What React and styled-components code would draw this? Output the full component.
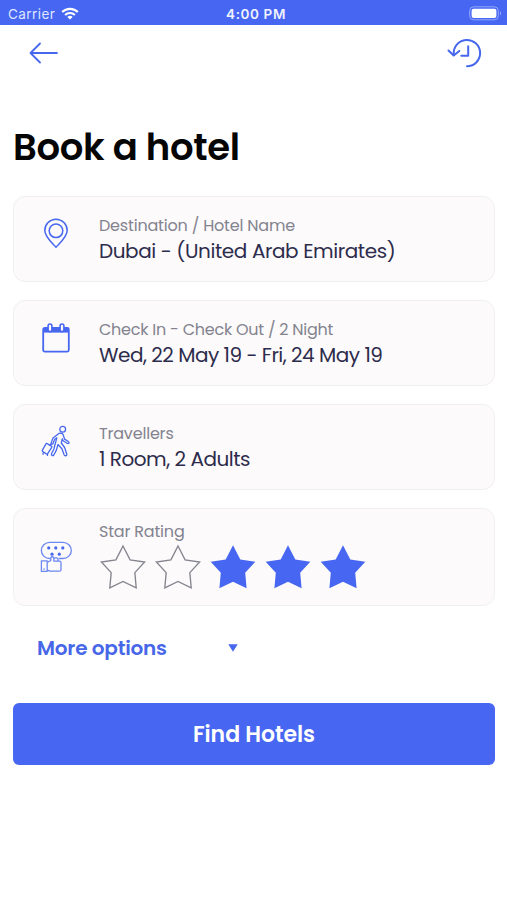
import React, { useState } from 'react'
import styled, { createGlobalStyle } from 'styled-components'

const GlobalStyle = createGlobalStyle`
  * {
    box-sizing: border-box;
  }
  body {
    margin: 0;
    background-color: #fff;
    font-family: 'Poppins', 'Inter', sans-serif;
  }
  button {
    font-family: inherit;
    border: none;
    background: none;
    padding: 0;
    cursor: pointer;
  }
  svg {
    display: block;
  }
`;

const Screen = styled.div`
  width: 100%;
  min-height: 900px;
  background-color: #fff;
`;

const StatusBar = styled.div`
  display: grid;
  grid-template-columns: 1fr auto 1fr;
  align-items: center;
  height: 25px;
  padding: 2px 5px 0 8px;
  background-color: #4767f2;
  color: #fff;
  font-family: 'Inter', sans-serif;
`;

const Carrier = styled.div`
  display: flex;
  align-items: center;
  gap: 6px;
  font-size: 13.5px;
  letter-spacing: 0.45px;
  color: #dfe5ff;
`;

const Time = styled.div`
  font-size: 13.5px;
  font-weight: 600;
  letter-spacing: 0.6px;
  padding-left: 2px;
  color: #f0f3ff;
`;

const Battery = styled.div`
  justify-self: end;
`;

const NavBar = styled.nav`
  display: flex;
  justify-content: space-between;
  align-items: center;
  height: 56px;
  padding: 0 25px 0 29px;
`;

const Content = styled.main`
  padding: 0 12px 0 13px;
`;

const Title = styled.h1`
  margin: 41px 0 24px;
  font-size: 37px;
  line-height: 50px;
  font-weight: 600;
  letter-spacing: -0.35px;
  color: #050505;
`;

const CardList = styled.div`
  display: flex;
  flex-direction: column;
  gap: 18px;
`;

const Card = styled.div`
  display: flex;
  height: ${({ $tall }) => ($tall ? '98px' : '86px')};
  padding-top: ${({ $tall }) => ($tall ? '11px' : '17px')};
  border: 1px solid #f1f0f2;
  border-radius: 12px;
  background-color: #fcfafb;
`;

const IconBox = styled.div`
  display: flex;
  justify-content: center;
  width: 85px;
  padding: ${({ $top }) => $top}px 2px 0 0;
`;

const Label = styled.div`
  height: 24px;
  font-size: 16px;
  line-height: 24px;
  letter-spacing: ${({ $spacing }) => $spacing || -0.19}px;
  white-space: nowrap;
  color: #83838f;
`;

const Value = styled.div`
  font-size: 20px;
  line-height: 26px;
  letter-spacing: ${({ $spacing }) => $spacing || 0}px;
  white-space: nowrap;
  color: #2d2c4c;
`;

const Stars = styled.div`
  display: flex;
  gap: 9px;
  padding-left: 1px;
`;

const MoreOptions = styled.button`
  display: flex;
  align-items: center;
  justify-content: space-between;
  width: 201px;
  height: 30px;
  margin: 27px 0 40px 24px;
  font-size: 20px;
  font-weight: 600;
  letter-spacing: -0.22px;
  color: #4767e8;
`;

const FindButton = styled.button`
  display: block;
  width: 100%;
  height: 62px;
  border-radius: 6px;
  background-color: #4767f2;
  color: #fff;
  font-size: 22px;
  font-weight: 600;
  letter-spacing: -0.03px;
`;

const BLUE = '#4767ee'

function WifiIcon() {
  return (
    <svg width="18" height="13" viewBox="0 0 18 13" fill="none" stroke="#fff" strokeWidth="2.1">
      <path d="M1.2 5.1a11 11 0 0 1 15.6 0" />
      <path d="M4.1 8a6.9 6.9 0 0 1 9.8 0" />
      <path d="M9 12.6 6.3 10a3.8 3.8 0 0 1 5.4 0z" fill="#fff" stroke="none" />
    </svg>
  )
}

function BatteryIcon() {
  return (
    <svg width="33" height="15" viewBox="0 0 33 15">
      <rect x="0.7" y="0.8" width="28.6" height="13" rx="4" fill="none" stroke="#95a8fa" />
      <rect x="2.6" y="2.7" width="24.8" height="9.2" rx="2" fill="#fff" />
      <path d="M31 5.2v4.2c1.4-.6 1.4-3.6 0-4.2z" fill="#95a8fa" />
    </svg>
  )
}

function BackIcon() {
  return (
    <svg width="30" height="22" viewBox="0 0 30 22" fill="none" stroke={BLUE} strokeWidth="1.8" strokeLinecap="round" strokeLinejoin="round">
      <path d="M11 1.5 1.5 11 11 20.5M1.5 11H28" />
    </svg>
  )
}

function HistoryIcon() {
  return (
    <svg width="36" height="30" viewBox="0 0 36 30" fill="none" stroke={BLUE} strokeWidth="2" strokeLinecap="round" strokeLinejoin="round">
      <path d="M7.8 16.5A13.2 13.2 0 1 1 21 28.3" />
      <path d="m2.5 12.5 5.2 5L13.3 13" />
      <path d="M22.2 8.3v9.4h-6.9" />
    </svg>
  )
}

function PinIcon() {
  return (
    <svg width="26" height="32" viewBox="0 0 26 32" fill="none" stroke={BLUE} strokeWidth="1.5" strokeLinejoin="round">
      <path d="M13 29.3C8.6 24.4 1.8 18.7 1.8 12.5a11.2 11.2 0 0 1 22.4 0C24.2 18.7 17.4 24.4 13 29.3z" />
      <circle cx="13" cy="12.8" r="6.8" />
    </svg>
  )
}

function CalendarIcon() {
  return (
    <svg width="28" height="30" viewBox="0 0 28 30" fill="none" stroke={BLUE} strokeWidth="1.8">
      <rect x="1.2" y="5" width="25.6" height="23.6" rx="1.5" />
      <path d="M1.2 5h25.6v4.6H1.2z" fill={BLUE} stroke="none" />
      <rect x="6.1" y="1" width="3.8" height="7.6" rx="1.9" fill="#fcfafb" strokeWidth="1.6" />
      <rect x="18.1" y="1" width="3.8" height="7.6" rx="1.9" fill="#fcfafb" strokeWidth="1.6" />
    </svg>
  )
}

function TravellerIcon() {
  return (
    <svg width="30" height="32" viewBox="0 0 30 32" fill="none" stroke={BLUE} strokeWidth="1.3" strokeLinecap="round" strokeLinejoin="round">
      <circle cx="21.7" cy="4.2" r="2.9" />
      <path d="M18.2 8.3c1.9-.7 3.6.1 4.1 1.8l1.3 4 4 2.7c1 .8.1 2.3-1.1 1.7l-4.4-2.8-.8-1.9-1 4.2 3.3 4.5 2.2 6.8c.2 1.7-2.1 2-2.7.5l-2.2-6-3.9-4.3-1.6 5.6-2.6 4.9c-.9 1.2-3 .2-2.3-1.3l2.4-4.7 2.9-11.2-2.1 1.4-1.7 4.4c-.6 1-2.1.5-1.8-.7l1.8-5z" />
      <path d="M10.5 18.5 8.8 20.4" />
      <path d="m6.2 18.6 4.2 2.5c.5.3.6.8.3 1.3l-4 6.2c-.3.5-.8.6-1.3.3l-3.7-2.4c-.5-.3-.6-.8-.3-1.3l3.6-6.3c.2-.5.8-.6 1.2-.3zM2.1 28v1.3M6.5 29.2v1.2" />
    </svg>
  )
}

function RatingIcon() {
  return (
    <svg width="32" height="32" viewBox="0 0 32 32" fill="none" stroke="#6c88f3" strokeWidth="1.3" strokeLinejoin="round">
      <path d="M10.5 17.5H9.8a8.1 8.1 0 0 1 0-16.2h12.9a8.1 8.1 0 0 1 0 16.2h-4.2" transform="translate(-.4 0) scale(1.03 1)" />
      <path d="M1.4 19.8h5.8v10.5H1.4zM7.2 21.5l3.6-2v-2.7c.3-1.5 2.9-1.4 3 .3v3h5.8c1 0 1.5.7 1.4 1.6v7c0 .9-.6 1.5-1.6 1.5H10l-2.8-1M14 17.5c1.5-1.2 3.4-.7 4 .8v1.6M3.3 28.2h1.6" />
      <g fill={BLUE} stroke="none">
        <circle cx="8.7" cy="6.9" r="1.6" />
        <circle cx="15.8" cy="6.9" r="1.6" />
        <circle cx="22.8" cy="6.9" r="1.6" />
        <circle cx="12" cy="13.2" r="1.6" />
        <circle cx="19.3" cy="13.2" r="1.6" />
      </g>
    </svg>
  )
}

function Star({ filled, onClick }) {
  return (
    <svg width="46" height="45" viewBox="0 0 46 45" onClick={onClick}>
      <path
        d="m23 1.3 7.3 14.2 15 2.2-10.1 11 1.4 15.6L23 37.8 9.4 44.3l1.4-15.6L.7 17.7l15-2.2z"
        transform={filled ? undefined : 'translate(.7 .8) scale(.97)'}
        fill={filled ? '#4767f2' : 'none'}
        stroke={filled ? 'none' : '#85858f'}
        strokeWidth="1.4"
      />
    </svg>
  )
}

const fields = [
  {
    label: 'Destination / Hotel Name',
    value: 'Dubai - (United Arab Emirates)',
    valueSpacing: -0.41,
    icon: <PinIcon />,
    iconTop: 4,
  },
  {
    label: 'Check In - Check Out / 2 Night',
    value: 'Wed, 22 May 19 - Fri, 24 May 19',
    labelSpacing: -0.24,
    valueSpacing: -0.49,
    icon: <CalendarIcon />,
    iconTop: 5,
  },
  {
    label: 'Travellers',
    value: '1 Room, 2 Adults',
    valueSpacing: -0.48,
    icon: <TravellerIcon />,
    iconTop: 3,
  },
]

function StarRating() {
  const [selected, setSelected] = useState([false, false, true, true, true])
  const toggle = (index) =>
    setSelected(selected.map((on, i) => (i === index ? !on : on)))

  return (
    <Card $tall>
      <IconBox $top={21}><RatingIcon /></IconBox>
      <div>
        <Label>Star Rating</Label>
        <Stars>
          {selected.map((on, i) => (
            <Star key={i} filled={on} onClick={() => toggle(i)} />
          ))}
        </Stars>
      </div>
    </Card>
  )
}

function App() {
  return (
    <>
      <GlobalStyle />
      <Screen>
        <StatusBar>
          <Carrier>Carrier <WifiIcon /></Carrier>
          <Time>4:00 PM</Time>
          <Battery><BatteryIcon /></Battery>
        </StatusBar>
        <NavBar>
          <button aria-label="Back"><BackIcon /></button>
          <button aria-label="History"><HistoryIcon /></button>
        </NavBar>
        <Content>
          <Title>Book a hotel</Title>
          <CardList>
            {fields.map((field) => (
              <Card key={field.label}>
                <IconBox $top={field.iconTop}>{field.icon}</IconBox>
                <div>
                  <Label $spacing={field.labelSpacing}>{field.label}</Label>
                  <Value $spacing={field.valueSpacing}>{field.value}</Value>
                </div>
              </Card>
            ))}
            <StarRating />
          </CardList>
          <MoreOptions>
            More options
            <svg width="10" height="8" viewBox="0 0 10 8"><path d="M.3.3h9.4L5 7.8z" fill={BLUE} /></svg>
          </MoreOptions>
          <FindButton>Find Hotels</FindButton>
        </Content>
      </Screen>
    </>
  )
}

export default App
